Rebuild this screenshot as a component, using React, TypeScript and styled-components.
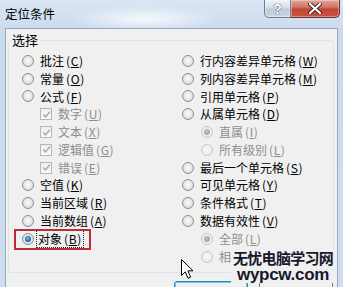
import React from "react";
import styled, { createGlobalStyle } from "styled-components";

const GlobalStyle = createGlobalStyle`
  html, body {
    margin: 0;
    padding: 0;
    background: #ffffff;
  }
  body {
    font-family: "Noto Sans CJK SC", "DejaVu Sans", sans-serif;
  }
`;

const Window = styled.div`
  position: relative;
  width: 343px;
  height: 287px;
  overflow: hidden;
  display: flex;
  flex-direction: column;
  background: linear-gradient(180deg, #dbe6f3 0%, #cbdbee 28px, #cddcee 100%);
`;

const TitleBar = styled.div`
  flex: none;
  height: 28px;
  display: flex;
  align-items: flex-start;
  padding: 0 3px 0 5px;
  background: radial-gradient(ellipse 75px 13px at 145px 19px, rgba(255, 255, 255, 0.8), rgba(255, 255, 255, 0) 100%);
`;

const Title = styled.div`
  margin-top: 7px;
  font-size: 12.5px;
  line-height: 14px;
  color: #000;
`;

const Caption = styled.div`
  display: flex;
  margin-left: auto;
`;

const CaptionButton = styled.div<{ $close?: boolean }>`
  width: ${(p) => (p.$close ? 49 : 27)}px;
  height: 18px;
  box-sizing: border-box;
  display: flex;
  align-items: center;
  justify-content: center;
  border: 1px solid ${(p) => (p.$close ? "#6b2e26" : "#6f7d8e")};
  border-top: none;
  border-left: ${(p) => (p.$close ? "none" : undefined)};
  border-radius: ${(p) => (p.$close ? "0 0 5px 0" : "0 0 0 5px")};
  background: ${(p) =>
    p.$close
      ? "linear-gradient(180deg, #e2a597 0%, #d3786a 40%, #c24432 55%, #c85444 100%)"
      : "linear-gradient(180deg, #eef2f7 0%, #d7e0ea 45%, #bfcbd9 55%, #c9d5e2 100%)"};
  box-shadow: inset 0 0 0 1px rgba(255, 255, 255, 0.35);
  color: #fff;
  font-family: "Liberation Sans", sans-serif;
  font-weight: 700;
  font-size: 14px;
  text-shadow: 0 0 1px #2e3b4b, 0 0 1px #2e3b4b;
`;

const Client = styled.div`
  flex: 1;
  min-height: 0;
  overflow: hidden;
  margin: 0 5px;
  border: 1px solid #98a9be;
  border-bottom: none;
  background: #f0f0f0;
  display: flex;
  flex-direction: column;
  padding: 4px 3px 0 2px;
`;

const Group = styled.fieldset`
  flex: none;
  margin: 0;
  padding: 5px 0 6px 13px;
  border: 1px solid #dde4ea;
  border-radius: 3px;
  min-width: 0;
`;

const Legend = styled.legend`
  margin-left: -10px;
  padding: 0 2px 0 0;
  font-size: 13px;
  line-height: 14px;
  color: #000;
`;

const Columns = styled.div`
  display: grid;
  grid-template-columns: 160px 1fr;
`;

const Column = styled.div`
  display: flex;
  flex-direction: column;
`;

const Row = styled.div<{ $indent?: number; $disabled?: boolean; $marked?: boolean }>`
  position: relative;
  flex: none;
  height: 17.8px;
  display: flex;
  align-items: center;
  padding-left: ${(p) => p.$indent ?? 0}px;
  font-size: 12px;
  line-height: 14px;
  white-space: nowrap;
  color: ${(p) => (p.$disabled ? "#8e8e8e" : "#000")};
  &::after {
    content: "";
    display: ${(p) => (p.$marked ? "block" : "none")};
    position: absolute;
    left: -8px;
    top: -1px;
    width: 77px;
    bottom: -2px;
    box-sizing: border-box;
    border: 2px solid #bd2d37;
  }
`;

const Radio = styled.span<{ $checked?: boolean; $disabled?: boolean }>`
  position: relative;
  flex: none;
  width: 12px;
  height: 12px;
  box-sizing: border-box;
  margin-right: 4px;
  border-radius: 50%;
  border: 1px solid ${(p) => (p.$disabled ? "#c6c8ca" : "#8d9195")};
  background: ${(p) =>
    p.$disabled
      ? "radial-gradient(circle at 50% 45%, #f7f7f7 0%, #eeeeee 60%, #e2e2e2 100%)"
      : "radial-gradient(circle at 50% 45%, #fbfbfb 0%, #e6e6e6 55%, #cfcfcf 100%)"};
  &::after {
    content: "";
    display: ${(p) => (p.$checked ? "block" : "none")};
    position: absolute;
    inset: 2px;
    border-radius: 50%;
    background: ${(p) =>
      p.$disabled
        ? "radial-gradient(circle at 45% 40%, #c4c4c4 0%, #a4a4a4 60%, #b8b8b8 100%)"
        : "radial-gradient(circle at 45% 40%, #8fd0f7 0%, #2b78bd 45%, #173f6e 100%)"};
  }
`;

const Check = styled.span`
  flex: none;
  width: 12px;
  height: 12px;
  box-sizing: border-box;
  margin-right: 4px;
  border: 1px solid #b5b8bb;
  background: linear-gradient(180deg, #efefef 0%, #fbfbfb 100%);
  display: flex;
  align-items: center;
  justify-content: center;
`;

const Text = styled.span<{ $focus?: boolean }>`
  padding: 1px 1px;
  margin-left: ${(p) => (p.$focus ? -2 : 0)}px;
  border: 1px dotted ${(p) => (p.$focus ? "#222" : "transparent")};
`;

const Key = styled.span`
  margin-left: 2px;
  letter-spacing: 0.6px;
`;

const ButtonRow = styled.div`
  flex: none;
  display: flex;
  justify-content: flex-end;
  gap: 11px;
  margin-top: 8px;
  padding-right: 1px;
`;

const DialogButton = styled.button<{ $default?: boolean }>`
  flex: none;
  width: 74px;
  height: 23px;
  padding: 0;
  border: 1px solid ${(p) => (p.$default ? "#3c7fb1" : "#707070")};
  border-radius: 3px;
  background: linear-gradient(180deg, #f2f2f2 0%, #ebebeb 48%, #dddddd 52%, #cfcfcf 100%);
  box-shadow: inset 0 0 0 1px ${(p) => (p.$default ? "#5fcbf5" : "#fcfcfc")};
  font-family: inherit;
  font-size: 12px;
  color: #000;
`;

const Cursor = styled.svg`
  position: absolute;
  left: 181px;
  top: 259px;
`;

const Watermark = styled.div`
  position: absolute;
  left: 231px;
  top: 249px;
  padding: 0 2px;
  display: flex;
  flex-direction: column;
  align-items: center;
  background: #f0f0f0;
  color: #17182b;
  font-weight: 700;
`;

const WatermarkCn = styled.div`
  font-family: "Noto Sans CJK SC", sans-serif;
  font-size: 15px;
  line-height: 18px;
  letter-spacing: -0.7px;
`;

const WatermarkEn = styled.div`
  margin-top: -1px;
  font-family: "Liberation Sans", sans-serif;
  font-size: 17px;
  line-height: 17px;
  letter-spacing: -0.3px;
`;

type Item = {
  label: string;
  k: string;
  kind: "radio" | "check";
  indent?: number;
  disabled?: boolean;
  checked?: boolean;
  marked?: boolean;
};

const left: Item[] = [
  { label: "批注", k: "C", kind: "radio" },
  { label: "常量", k: "O", kind: "radio" },
  { label: "公式", k: "F", kind: "radio" },
  { label: "数字", k: "U", kind: "check", indent: 18, disabled: true },
  { label: "文本", k: "X", kind: "check", indent: 18, disabled: true },
  { label: "逻辑值", k: "G", kind: "check", indent: 18, disabled: true },
  { label: "错误", k: "E", kind: "check", indent: 18, disabled: true },
  { label: "空值", k: "K", kind: "radio" },
  { label: "当前区域", k: "R", kind: "radio" },
  { label: "当前数组", k: "A", kind: "radio" },
  { label: "对象", k: "B", kind: "radio", checked: true, marked: true },
];

const right: Item[] = [
  { label: "行内容差异单元格", k: "W", kind: "radio" },
  { label: "列内容差异单元格", k: "M", kind: "radio" },
  { label: "引用单元格", k: "P", kind: "radio" },
  { label: "从属单元格", k: "D", kind: "radio" },
  { label: "直属", k: "I", kind: "radio", indent: 19, disabled: true, checked: true },
  { label: "所有级别", k: "L", kind: "radio", indent: 19, disabled: true },
  { label: "最后一个单元格", k: "S", kind: "radio" },
  { label: "可见单元格", k: "Y", kind: "radio" },
  { label: "条件格式", k: "T", kind: "radio" },
  { label: "数据有效性", k: "V", kind: "radio" },
  { label: "全部", k: "L", kind: "radio", indent: 19, disabled: true, checked: true },
  { label: "相同", k: "E", kind: "radio", indent: 19, disabled: true },
];

const Option = ({ item }: { item: Item }) => (
  <Row $indent={item.indent} $disabled={item.disabled} $marked={item.marked}>
    {item.kind === "radio" ? (
      <Radio $checked={item.checked} $disabled={item.disabled} />
    ) : (
      <Check>
        <svg width="9" height="9" viewBox="0 0 9 9">
          <path d="M1.2 4.6 L3.5 7 L7.9 1.6" fill="none" stroke="#a2a5a8" strokeWidth="1.4" />
        </svg>
      </Check>
    )}
    <Text $focus={item.marked}>
      {item.label}
      <Key>
        (<u>{item.k}</u>)
      </Key>
    </Text>
  </Row>
);

const App = () => {
  return (
    <Window>
      <GlobalStyle />
      <TitleBar>
        <Title>定位条件</Title>
        <Caption>
          <CaptionButton>?</CaptionButton>
          <CaptionButton $close>
            <svg width="14" height="11" viewBox="0 0 14 11">
              <path d="M2 1 L12 10 M12 1 L2 10" stroke="#3a1f1c" strokeWidth="4" strokeLinecap="round" />
              <path d="M2 1 L12 10 M12 1 L2 10" stroke="#ffffff" strokeWidth="2.2" strokeLinecap="round" />
            </svg>
          </CaptionButton>
        </Caption>
      </TitleBar>
      <Client>
        <Group>
          <Legend>选择</Legend>
          <Columns>
            <Column>
              {left.map((it) => (
                <Option key={it.label} item={it} />
              ))}
            </Column>
            <Column>
              {right.map((it) => (
                <Option key={it.label} item={it} />
              ))}
            </Column>
          </Columns>
        </Group>
        <ButtonRow>
          <DialogButton $default>确定</DialogButton>
          <DialogButton>取消</DialogButton>
        </ButtonRow>
      </Client>
      <Cursor width="13" height="21" viewBox="0 0 13 21">
        <path
          d="M0.5 0.5 L0.5 16.5 L4.3 12.8 L7 19.2 L9.6 18.1 L6.9 11.8 L12 11.8 Z"
          fill="#ffffff"
          stroke="#000000"
          strokeWidth="1"
          strokeLinejoin="round"
        />
      </Cursor>
      <Watermark>
        <WatermarkCn>无忧电脑学习网</WatermarkCn>
        <WatermarkEn>wypcw.com</WatermarkEn>
      </Watermark>
    </Window>
  );
};

export default App;
